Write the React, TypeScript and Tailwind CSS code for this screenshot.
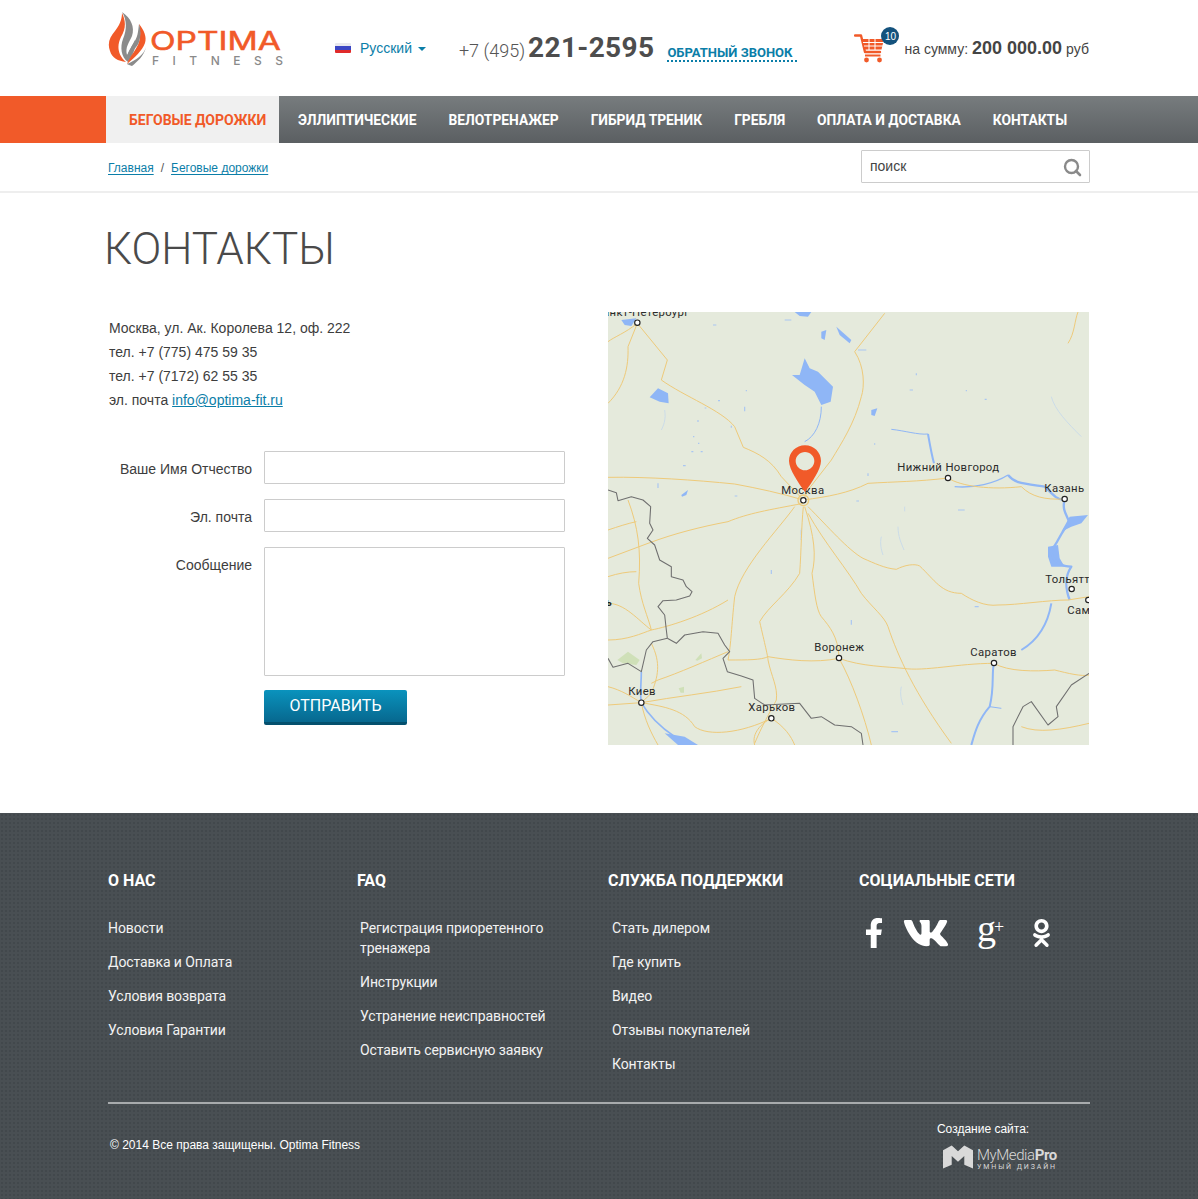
import React from 'react'
import { FaFacebookF, FaVk, FaOdnoklassniki } from 'react-icons/fa'

const NAV_ITEMS = [
  'Эллиптические',
  'Велотренажер',
  'Гибрид треник',
  'Гребля',
  'Оплата и доставка',
  'Контакты',
]

const ROADS = [
  'M88 40 L60 110 C62 170 50 230 0 280',
  'M88 40 L178 150 L160 210 C230 260 340 300 380 350 L406 412 C450 430 490 450 520 500 L586 570',
  'M88 40 C50 70 20 80 0 95',
  'M830 10 L740 125 C770 170 770 230 760 260 C740 340 700 400 670 450 L600 540 L586 570',
  'M0 502 C120 500 260 510 380 522 C450 535 520 550 586 570',
  'M586 570 C660 560 720 550 780 520 C860 515 930 515 1020 504 C1060 530 1150 540 1240 530 C1270 560 1310 570 1370 567',
  'M586 580 C480 600 420 610 360 635 C280 650 200 670 120 700 C80 715 40 730 0 745',
  'M0 800 C30 790 60 785 85 785',
  'M60 570 C90 650 100 720 92 820 C100 880 120 920 130 960',
  'M0 660 C30 650 60 640 85 635',
  'M560 590 C510 660 400 770 380 860 C370 950 370 1000 360 1050',
  'M586 590 C580 650 580 720 575 790 C540 850 480 890 455 935 C470 1000 480 1040 480 1050 C490 1100 510 1130 505 1170 C490 1200 470 1230 440 1300',
  'M590 590 C620 680 625 740 612 790 C620 850 625 900 640 920 C665 950 690 980 693 1040',
  'M600 610 C650 700 720 780 760 850 C790 890 830 920 840 950 C870 1040 920 1150 1030 1300',
  'M600 590 C660 650 720 720 765 745 C800 760 830 775 865 778 C890 765 920 760 935 768 C980 810 1000 850 1060 850 C1090 870 1130 890 1170 885 C1230 885 1320 870 1380 870 L1443 860',
  'M360 1050 C420 1050 460 1050 480 1040 C540 1050 620 1060 693 1045 C760 1070 840 1070 885 1075 C950 1085 1050 1060 1158 1060 C1200 1085 1280 1085 1340 1080 C1380 1090 1420 1100 1443 1095',
  'M360 1025 C300 1050 210 1090 150 1110 L130 1120',
  'M100 1178 C200 1160 300 1150 400 1130',
  'M100 1178 C170 1190 230 1200 260 1250 C300 1280 400 1270 490 1225 C530 1250 550 1280 560 1305',
  'M490 1225 C460 1240 430 1270 440 1305',
  'M130 1000 C160 1060 150 1100 130 1150 L100 1178',
  'M0 1185 L100 1178 C110 1230 130 1270 150 1305',
  'M0 1130 C40 1140 70 1160 100 1178',
  'M0 880 C50 880 90 930 130 960 C180 950 280 920 360 870',
  'M0 990 C60 990 100 970 130 960',
  'M693 1045 C730 1110 770 1220 790 1305',
  'M1240 1250 C1290 1270 1360 1260 1443 1240',
  'M1380 100 C1400 70 1400 30 1410 6',
]

const BORDERS = [
  'M0 540 L25 548 L30 572 L70 560 L105 570 L128 590 L125 640 L135 660 L118 685 L140 705 L155 750 L190 770 L190 800 L225 810 L235 830 L252 845 L245 858 L205 870 L165 872 L150 890 L170 915 L175 960 L178 985 L135 995 L115 1020 L100 1085 L60 1060 L15 1072 L0 1045',
  'M178 985 L205 1000 L230 975 L285 965 L330 970 L350 1005 L365 1025 L345 1045 L358 1085 L400 1098 L435 1110 L440 1165 L470 1185 L575 1180 L610 1225 L640 1220 L680 1245 L730 1250 L760 1270 L765 1305',
  'M1215 1305 L1215 1250 L1245 1190 L1270 1175 L1320 1245 L1350 1220 L1345 1190 L1390 1125 L1443 1090',
]

const LAKES = [
  'M590 145 L605 175 L630 185 L675 230 L668 275 L640 285 L620 245 L590 225 L552 195 L575 195 Z',
  'M125 262 L150 235 L180 250 L182 280 L155 275 Z',
  'M685 50 L730 90 L725 100 L695 75 Z',
  'M560 6 L610 6 L600 20 L575 18 Z',
  'M640 65 L655 60 L650 90 L640 85 Z',
  'M790 300 L808 295 L800 318 L790 315 Z',
  'M40 30 L85 25 L70 48 L50 45 Z',
  'M1385 620 L1440 615 L1420 640 L1390 650 L1360 665 Z',
  'M1320 710 L1350 705 L1355 745 L1370 770 L1330 770 L1320 740 Z',
  'M220 555 L240 540 L235 555 L222 560 Z',
  'M170 1270 L230 1280 L270 1305 L210 1305 Z',
]

const RIVERS = [
  { d: 'M1200 495 C1220 520 1240 520 1310 530 C1340 560 1350 570 1370 570 C1360 600 1380 620 1385 640 C1360 660 1350 700 1330 720 C1330 760 1370 770 1390 770 C1370 800 1370 830 1385 870', w: 7 },
  { d: 'M1330 880 C1320 940 1290 990 1240 1020 M1158 1060 C1150 1090 1160 1130 1145 1190 C1110 1230 1100 1270 1090 1305', w: 6 },
  { d: 'M960 372 C965 400 970 430 978 460', w: 6 },
  { d: 'M850 358 C890 362 930 375 960 372', w: 3 },
  { d: 'M100 1085 C100 1120 95 1150 100 1178 C130 1230 170 1260 200 1280', w: 5 },
  { d: 'M590 395 C620 380 640 340 640 290', w: 3 },
  { d: 'M1040 530 C1100 535 1160 520 1200 495', w: 4 },
  { d: 'M1145 1190 L1180 1195', w: 3 },
]

// мелкие озёра и притоки
const WATER_SPECKS = 'M225 467 h8 M150 520 v14 M745 573 h8 M905 240 h10 M925 190 v6 M315 45 h10 M330 272 h6 M290 294 h5 M370 347 v6 M270 330 v6 M255 380 h4 M270 400 h4 M250 425 h6 M278 425 h6 M1100 890 h12 M530 30 h20 M750 120 h25 M800 400 v4 M1130 268 h6 M1075 240 v4 M415 240 v4 M410 290 v14 M380 558 h8 M1050 600 h20 M580 660 v14 M730 930 v14 M850 1265 h20 M490 780 v12 M780 490 v8'
const FAINT_RIVERS = 'M870 650 C870 680 880 700 888 720 M820 680 C815 700 820 720 825 735 M880 1130 C875 1150 880 1170 885 1185 M890 590 v14 M1330 260 C1340 300 1380 340 1420 380 M580 655 L578 690 M170 300 C175 330 165 350 160 360'

const CITIES = [
  { name: 'Нижний Новгород', x: 868, y: 482, dx: 1020, dy: 504 },
  { name: 'Казань', x: 1309, y: 546, dx: 1370, dy: 567 },
  { name: 'Тольятти', x: 1312, y: 818, dx: 1391, dy: 837 },
  { name: 'Самара', x: 1378, y: 911, dx: 1441, dy: 870 },
  { name: 'Воронеж', x: 619, y: 1022, dx: 693, dy: 1044 },
  { name: 'Саратов', x: 1087, y: 1037, dx: 1158, dy: 1059 },
  { name: 'Киев', x: 61, y: 1155, dx: 100, dy: 1178 },
  { name: 'Харьков', x: 421, y: 1203, dx: 490, dy: 1225 },
  { name: 'Москва', x: 520, y: 552, dx: 586, dy: 571 },
  { name: 'Санкт-Петербург', x: -38, y: 18, dx: 88, dy: 38 },
]

function Logo() {
  return (
    <svg width="176" height="58" viewBox="0 0 176 58" className="shrink-0">
      <path d="M14 2 C23 8 27 17 24 26 C21 33 17 37 19 45 C21 42 24 36 27 30 C29 36 25 45 20 52 C13 47 12 37 15 29 C19 20 19 10 14 2Z" fill="#8b8b8b" />
      <path d="M14 3 C18 11 18 19 13 27 C9 35 9 44 18 52 C10 51 4 48 2 41 C-1 33 2 27 7 21 C11 16 14 10 14 3Z" fill="#f15a29" />
      <path d="M31 14 C36 20 39 27 37 33 C34 41 27 47 19 54 C22 46 29 39 31 32 C33 26 32 20 31 14Z" fill="#f15a29" />
      <path d="M31 14 C30 22 30 27 25 34 C22 39 19 43 19 50 C22 42 29 38 31 32 C33 26 33 20 31 14Z" fill="#8b8b8b" />
      <path d="M19 54 C28 50 36 45 38 37 C36 46 29 52 24 56 C22 55 20 55 19 54Z" fill="#8b8b8b" />
      <text x="42" y="40" textLength="131" lengthAdjust="spacingAndGlyphs" fontFamily="Inter, sans-serif" fontSize="25" fontWeight="400" fill="#f15a29" stroke="#f15a29" strokeWidth="0.5">
        OPTIMA
      </text>
      <text x="44" y="55" textLength="131" lengthAdjust="spacing" fontFamily="Inter, sans-serif" fontSize="12" fontWeight="500" fill="#8a8a8a">
        FITNESS
      </text>
    </svg>
  )
}

function Flag() {
  return (
    <span className="flex h-[10px] w-4 flex-col overflow-hidden rounded-[1px]">
      <span className="h-[3px] bg-[#e8e8ee]" />
      <span className="h-1 bg-[#3b46c4]" />
      <span className="h-[3px] bg-[#e02a2a]" />
    </span>
  )
}

function CartIcon() {
  return (
    <svg width="32" height="32" viewBox="0 0 32 32" className="shrink-0" fill="none">
      <path d="M1 3.5 H7 L11 20 H26" stroke="#f15a29" strokeWidth="2.4" strokeLinecap="round" strokeLinejoin="round" />
      <path d="M8 7 H30 L27.5 17.5 H10.5 Z" fill="#f15a29" />
      <path d="M9 10.5 H30 M10 14 H29 M15 7 V18 M21 7 V18" stroke="#fff" strokeWidth="1" />
      <path d="M11 23.5 H26.5" stroke="#f15a29" strokeWidth="2" />
      <circle cx="12.5" cy="28" r="2.4" fill="#f15a29" />
      <circle cx="25.5" cy="28" r="2.4" fill="#f15a29" />
    </svg>
  )
}

function MapBlock() {
  return (
    <div className="relative h-[433px] w-[481px] shrink-0 overflow-hidden bg-[#e5eadc]">
      <svg viewBox="0 6 1443 1299" width="481" height="433" fill="none">
        <path d="M28 1050 L60 1025 L95 1050 L85 1065 L45 1060Z" fill="#cfe0b8" />
        <path d="M262 1050 L280 1030 L282 1045 L268 1052Z M212 1135 L228 1130 L228 1148 L218 1148Z" fill="#cfe0b8" />
        {LAKES.map((d, i) => (
          <path key={i} d={d} fill="#8fb6f6" />
        ))}
        <path d={WATER_SPECKS} stroke="#a9c6f2" strokeWidth="3.5" />
        <path d={FAINT_RIVERS} stroke="#c5d8ea" strokeWidth="2.5" />
        {RIVERS.map((r, i) => (
          <path key={i} d={r.d} stroke="#8fb6f6" strokeWidth={r.w} strokeLinejoin="round" />
        ))}
        {ROADS.map((d, i) => (
          <path key={i} d={d} stroke="#eeca7a" strokeWidth="3" />
        ))}
        {BORDERS.map((d, i) => (
          <path key={i} d={d} stroke="#6f6f6f" strokeWidth="3.2" strokeLinejoin="round" />
        ))}
        <circle cx="586" cy="571" r="16" stroke="#eeca7a" strokeWidth="4" />
        {CITIES.map((c) => (
          <g key={c.name}>
            <circle cx={c.dx} cy={c.dy} r="8" fill="#fff" stroke="#222" strokeWidth="3.5" />
            <text x={c.x} y={c.y} fontFamily="Roboto, sans-serif" fontSize="34" letterSpacing="1" fill="#2b2b2b">
              {c.name}
            </text>
          </g>
        ))}
        <text x="-6" y="888" fontFamily="Roboto, sans-serif" fontSize="30" fontWeight="700" fill="#222">
          ь
        </text>
        <path
          fillRule="evenodd"
          d="M591 406 C618 406 639 427 639 453 C639 478 610 520 591 546 C572 520 543 478 543 453 C543 427 564 406 591 406 Z M591 426 C576 426 563 438 563 453 C563 468 576 481 591 481 C606 481 619 468 619 453 C619 438 606 426 591 426 Z"
          fill="#f15a29"
        />
      </svg>
    </div>
  )
}

function FooterLink({ children }: { children: React.ReactNode }) {
  return <li className="text-[14px] leading-[20px] tracking-[-0.1px] text-[#f2f2f2]">{children}</li>
}

export default function App() {
  const sans = "font-['Liberation_Sans',Arial,sans-serif]"

  return (
    <div className="w-[1198px] bg-white font-['Roboto',sans-serif]">
      {/* шапка */}
      <header className="flex h-24 items-center pl-[108px]">
        <div className="-mt-[18px]">
          <Logo />
        </div>
        <div className={`ml-[51px] flex items-center ${sans} text-[14px] text-[#0b7ea8]`}>
          <Flag />
          <span className="ml-[9px]">Русский</span>
          <span className="ml-[6px] mt-[2px] h-0 w-0 border-x-[4px] border-t-[4px] border-x-transparent border-t-[#0b7ea8]" />
        </div>
        <div className="ml-[33px] flex items-baseline text-[#555]">
          <span className="text-[18px] font-light">+7 (495)</span>
          <span className="ml-[3px] text-[28px] font-bold tracking-[0.35px] text-[#4d4d4d]">221-2595</span>
          <span className="ml-[13px] border-b-2 border-dotted border-[#0b7ea8] pr-[5px] text-[13px] font-bold uppercase leading-[15px] text-[#0b7ea8]">
            Обратный звонок
          </span>
        </div>
        <div className="relative ml-[57px]">
          <CartIcon />
          <span className={`absolute -right-[13px] -top-[5px] flex h-[18px] w-[18px] items-center justify-center rounded-full bg-[#14527d] ${sans} text-[10px] text-white`}>
            10
          </span>
        </div>
        <div className={`ml-[18px] flex items-baseline ${sans} text-[14px] text-[#444]`}>
          на сумму:
          <span className="mx-[4px] text-[18px] font-bold text-[#444]">200 000.00</span>
          руб
        </div>
      </header>

      {/* меню */}
      <nav className="flex h-[47px]">
        <div className="w-[106px] bg-[#f15a29]" />
        <a className="flex w-[173px] items-center bg-[#f0f0f0] pl-[23px] pt-[2px] text-[14px] font-bold uppercase text-[#f15a29]">
          Беговые дорожки
        </a>
        <ul className="flex flex-1 items-center gap-[32px] bg-gradient-to-b from-[#777c7e] to-[#5b5f62] pl-[19px] pt-[2px]">
          {NAV_ITEMS.map((item) => (
            <li key={item} className="text-[13.8px] font-bold uppercase text-white">
              {item}
            </li>
          ))}
        </ul>
      </nav>

      {/* хлебные крошки и поиск */}
      <div className={`flex h-[50px] items-center justify-between border-b-2 border-[#eeeeee] px-[108px] ${sans}`}>
        <div className="mt-[2px] flex items-center text-[12px] text-[#0b7ea8]">
          <a className="underline underline-offset-2">Главная</a>
          <span className="mx-[7px] text-[#555]">/</span>
          <a className="underline underline-offset-2">Беговые дорожки</a>
        </div>
        <div className="-mt-px flex h-[33px] w-[229px] items-center justify-between rounded-[1px] border border-[#cccccc] pl-2 pr-[7px]">
          <span className="text-[14px] text-[#444]">поиск</span>
          <svg width="20" height="20" viewBox="0 0 20 20" fill="none">
            <circle cx="9.5" cy="9.5" r="6.5" stroke="#8a8a8a" strokeWidth="2.4" />
            <path d="M14 14 L18 18" stroke="#8a8a8a" strokeWidth="2.6" strokeLinecap="round" />
          </svg>
        </div>
      </div>

      {/* основное */}
      <main className="pb-[68px] pl-[108px]">
        <div className="flex h-[119px] items-start pt-[28px]">
          <h1 className="-ml-[4px] text-[44px] font-light uppercase leading-[56px] text-[#4a4a4a]">Контакты</h1>
        </div>
        <div className="flex">
          <div className={`w-[457px] shrink-0 pt-[4px] ${sans} text-[14px] text-[#3d3d3d]`}>
            <div className="pl-[1px] leading-[24px]">
              <p>Москва, ул. Ак. Королева 12, оф. 222</p>
              <p>тел. +7 (775) 475 59 35</p>
              <p>тел. +7 (7172) 62 55 35</p>
              <p>
                эл. почта <a className="text-[#0b7ea8] underline">info@optima-fit.ru</a>
              </p>
            </div>
            <form className="mt-[39px] flex flex-col gap-[15px]">
              <div className="flex items-center">
                <label className="w-[144px] pt-[3px] text-right">Ваше Имя Отчество</label>
                <input className="ml-3 h-[33px] w-[301px] rounded-[1px] border border-[#cccccc]" />
              </div>
              <div className="flex items-center">
                <label className="w-[144px] pt-[3px] text-right">Эл. почта</label>
                <input className="ml-3 h-[33px] w-[301px] rounded-[1px] border border-[#cccccc]" />
              </div>
              <div className="flex items-start">
                <label className="w-[144px] pt-[8px] text-right">Сообщение</label>
                <textarea className="ml-3 h-[129px] w-[301px] resize-none rounded-[1px] border border-[#cccccc]" />
              </div>
              <button
                type="button"
                className="ml-[156px] -mt-px h-[35px] w-[143px] rounded-[2px] border-b-[3px] border-[#04506e] bg-gradient-to-b from-[#0a93bd] to-[#07688f] font-['Roboto',sans-serif] text-[16px] uppercase text-white"
              >
                Отправить
              </button>
            </form>
          </div>
          <div className="ml-[43px]">
            <MapBlock />
          </div>
        </div>
      </main>

      {/* подвал */}
      <footer className="h-[386px] bg-[#494f53] bg-[radial-gradient(circle,#42484c_1px,transparent_1px)] bg-size-[4px_4px] px-[108px] pt-[58px]">
        <div className="grid h-[231px] grid-cols-[249px_251px_251px_231px]">
          <div>
            <h3 className="text-[16px] font-bold uppercase leading-[20px] text-white">О нас</h3>
            <ul className="mt-[27px] flex flex-col gap-[14px]">
              <FooterLink>Новости</FooterLink>
              <FooterLink>Доставка и Оплата</FooterLink>
              <FooterLink>Условия возврата</FooterLink>
              <FooterLink>Условия Гарантии</FooterLink>
            </ul>
          </div>
          <div>
            <h3 className="text-[16px] font-bold uppercase leading-[20px] text-white">FAQ</h3>
            <ul className="mt-[27px] flex w-[205px] flex-col gap-[14px] pl-[3px]">
              <FooterLink>Регистрация приоретенного тренажера</FooterLink>
              <FooterLink>Инструкции</FooterLink>
              <FooterLink>Устранение неисправностей</FooterLink>
              <FooterLink>Оставить сервисную заявку</FooterLink>
            </ul>
          </div>
          <div>
            <h3 className="text-[16px] font-bold uppercase leading-[20px] text-white">Служба поддержки</h3>
            <ul className="mt-[27px] flex flex-col gap-[14px] pl-1">
              <FooterLink>Стать дилером</FooterLink>
              <FooterLink>Где купить</FooterLink>
              <FooterLink>Видео</FooterLink>
              <FooterLink>Отзывы покупателей</FooterLink>
              <FooterLink>Контакты</FooterLink>
            </ul>
          </div>
          <div>
            <h3 className="text-[16px] font-bold uppercase leading-[20px] text-white">Социальные сети</h3>
            <div className="mt-[27px] flex h-[30px] items-center text-white">
              <FaFacebookF className="ml-[5px] h-[30px] w-[20px]" />
              <FaVk className="ml-[17px] h-[42px] w-[50px]" />
              <span className="ml-[26px] flex w-[28px] items-start font-['Liberation_Serif',serif] leading-none">
                <span className="-mt-[11px] text-[38px]">g</span>
                <span className="-ml-[2px] -mt-[2px] text-[18px]">+</span>
              </span>
              <FaOdnoklassniki className="ml-[27px] h-[28px] w-[19px]" />
            </div>
          </div>
        </div>
        <div className="border-t-2 border-[#a8abad]" />
        <div className={`flex justify-between ${sans} text-[12px] text-white`}>
          <p className="ml-[2px] mt-[32px]">© 2014 Все права защищены. Optima Fitness</p>
          <div className="mr-[33px] mt-[16px] flex flex-col">
            <span className="-ml-[6px]">Создание сайта:</span>
            <div className="mt-[5px] flex items-center">
              <svg width="30" height="24" viewBox="0 0 31 24" className="shrink-0">
                <path d="M0 5 L9 0 L15.5 6 L22 0 L31 5 V24 L22 20 V11 L15.5 17 L9 11 V20 L0 24 Z" fill="#d9d9d9" />
              </svg>
              <div className="ml-1 flex flex-col pt-[5px] font-['Roboto',sans-serif] text-[#d9d9d9]">
                <span className="text-[15px] font-light leading-[15px] tracking-[-0.4px]">
                  MyMedia<span className="font-bold">Pro</span>
                </span>
                <span className="whitespace-nowrap text-[7px] uppercase leading-[8px] tracking-[1.9px]">Умный дизайн</span>
              </div>
            </div>
          </div>
        </div>
      </footer>
    </div>
  )
}
